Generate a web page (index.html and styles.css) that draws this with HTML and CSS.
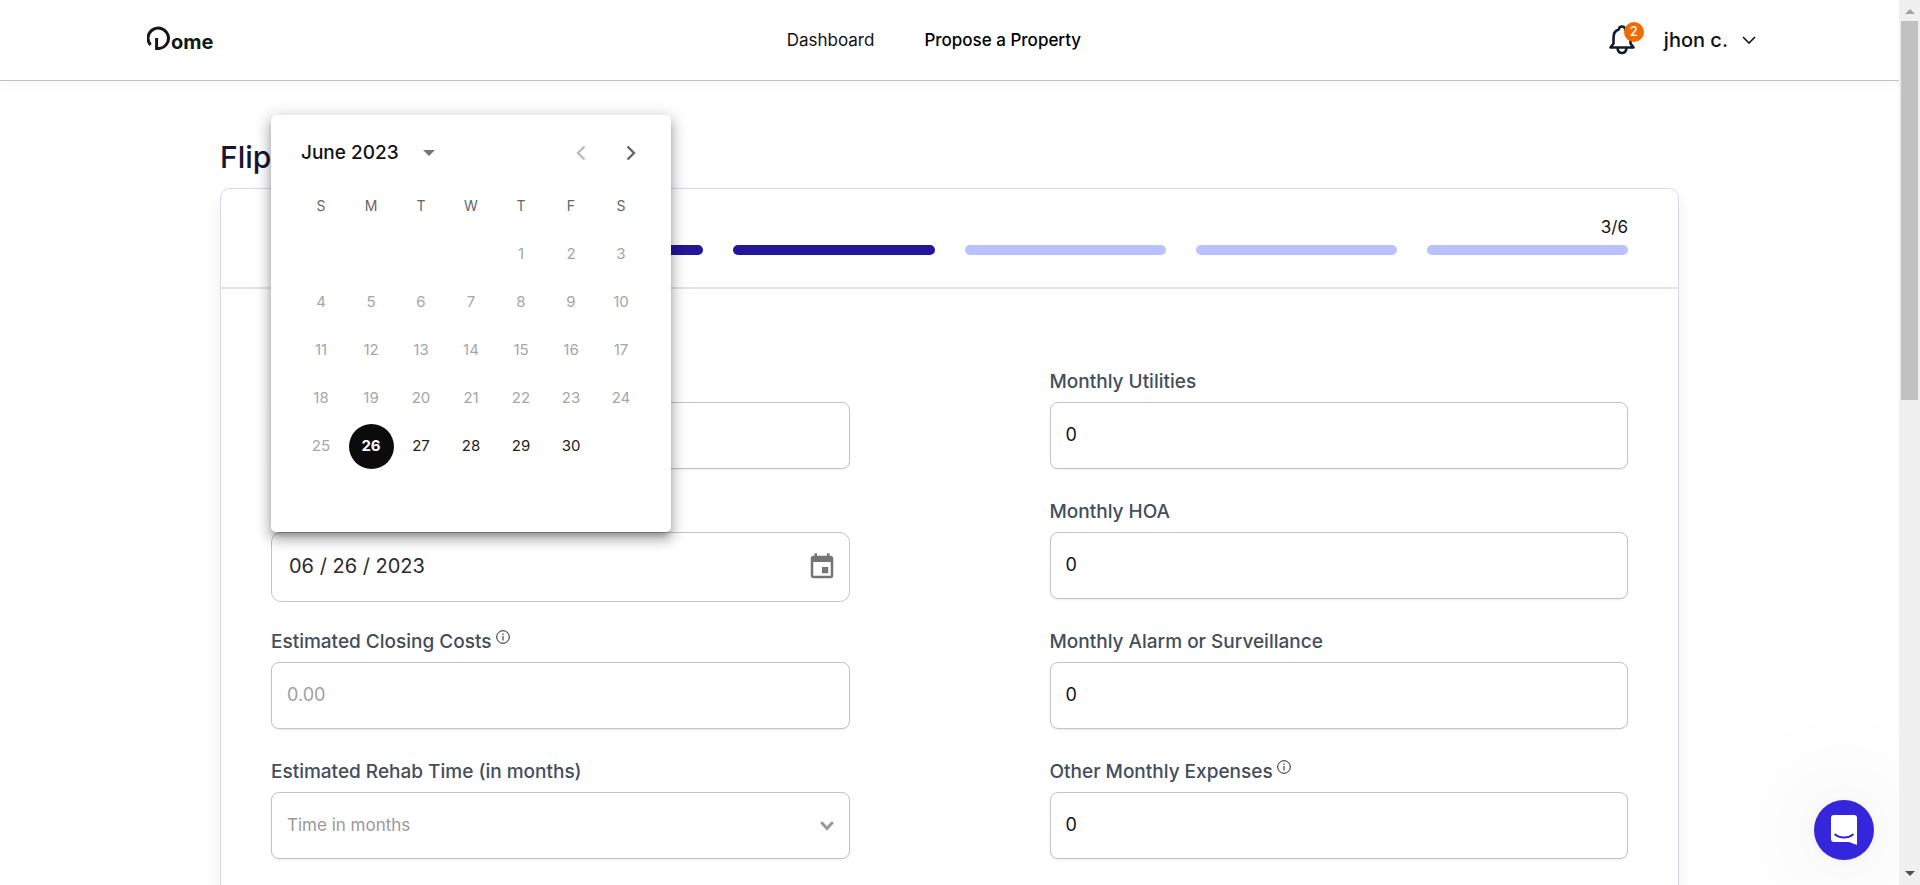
FILE: index.html
```
<!DOCTYPE html>
<html lang="en">
<head>
<meta charset="utf-8">
<title>Dome</title>
<link rel="stylesheet" href="styles.css">
</head>
<body>
<div class="page">
  <header class="topbar">
    <a class="logo" href="#">
      <svg class="logo-mark" viewBox="0 0 24 24" aria-hidden="true"><path d="M3.6 19A10.2 10.2 0 1 1 12 22.4H9.6V12" fill="none" stroke="currentColor" stroke-width="3"/></svg>
      <span>ome</span>
    </a>
    <nav class="nav">
      <a href="#">Dashboard</a>
      <a class="nav-current" href="#">Propose a Property</a>
    </nav>
    <div class="account">
      <button class="bell" aria-label="Notifications">
        <svg viewBox="0 0 26 30" aria-hidden="true"><path d="M1.500 22.500H24.500L21.500 18.500V13C21.500 8.500 19.500 5.500 16.300 4.600C16 2.400 14.800 1.500 13 1.500S10 2.400 9.700 4.600C6.500 5.500 4.500 8.500 4.500 13V18.500L1.500 22.500M8.500 23.500C9 26.500 10.600 28 13 28S17 26.500 17.500 23.500" fill="none" stroke="currentColor" stroke-width="2.600" stroke-linejoin="round" stroke-linecap="round"/></svg>
        <span class="badge">2</span>
      </button>
      <button class="user">jhon c.
        <svg viewBox="0 0 14 8" aria-hidden="true"><path d="M1 1L7 7L13 1" fill="none" stroke="currentColor" stroke-width="1.600"/></svg>
      </button>
    </div>
  </header>

  <main class="content">
    <h1 class="title">Flip</h1>
    <section class="card">
      <div class="progress">
        <span class="progress-count">3/6</span>
        <div class="steps">
          <span class="step step-done"></span>
          <span class="step step-done"></span>
          <span class="step step-done"></span>
          <span class="step"></span>
          <span class="step"></span>
          <span class="step"></span>
        </div>
      </div>
      <form class="form">
        <div class="field field-bare">
          <input class="control" type="text" aria-label="Amount">
        </div>
        <div class="field">
          <label for="utilities">Monthly Utilities</label>
          <input class="control" id="utilities" type="text" value="0">
        </div>

        <div class="field field-bare">
          <div class="date">
            <input class="control control-date" type="text" value="06 / 26 / 2023" aria-label="Date">
            <button class="date-toggle" type="button" aria-label="Choose date">
              <svg viewBox="0 0 24 24" aria-hidden="true"><path fill="currentColor" d="M17 12h-5v5h5v-5zM16 1v2H8V1H6v2H5c-1.110 0-1.990.9-1.990 2L3 19c0 1.100.890 2 2 2h14c1.100 0 2-.9 2-2V5c0-1.100-.9-2-2-2h-1V1h-2zm3 18H5V8h14v11z"/></svg>
            </button>
            <div class="calendar" role="dialog" aria-label="Calendar">
              <div class="calendar-head">
                <button class="month" type="button">June 2023
                  <svg viewBox="0 0 12 6" aria-hidden="true"><path d="M0 0H12L6 6z" fill="#757575"/></svg>
                </button>
                <div class="arrows">
                  <button class="arrow" type="button" disabled aria-label="Previous month"><svg viewBox="0 0 10 16" aria-hidden="true"><path d="M8.500 1.500L2 8L8.500 14.500" fill="none" stroke="currentColor" stroke-width="2.400"/></svg></button>
                  <button class="arrow" type="button" aria-label="Next month"><svg viewBox="0 0 10 16" aria-hidden="true"><path d="M1.500 1.500L8 8L1.500 14.500" fill="none" stroke="currentColor" stroke-width="2.400"/></svg></button>
                </div>
              </div>
              <table class="days">
                <thead>
                  <tr><th>S</th><th>M</th><th>T</th><th>W</th><th>T</th><th>F</th><th>S</th></tr>
                </thead>
                <tbody>
                  <tr><td></td><td></td><td></td><td></td><td><button type="button" disabled>1</button></td><td><button type="button" disabled>2</button></td><td><button type="button" disabled>3</button></td></tr>
                  <tr><td><button type="button" disabled>4</button></td><td><button type="button" disabled>5</button></td><td><button type="button" disabled>6</button></td><td><button type="button" disabled>7</button></td><td><button type="button" disabled>8</button></td><td><button type="button" disabled>9</button></td><td><button type="button" disabled>10</button></td></tr>
                  <tr><td><button type="button" disabled>11</button></td><td><button type="button" disabled>12</button></td><td><button type="button" disabled>13</button></td><td><button type="button" disabled>14</button></td><td><button type="button" disabled>15</button></td><td><button type="button" disabled>16</button></td><td><button type="button" disabled>17</button></td></tr>
                  <tr><td><button type="button" disabled>18</button></td><td><button type="button" disabled>19</button></td><td><button type="button" disabled>20</button></td><td><button type="button" disabled>21</button></td><td><button type="button" disabled>22</button></td><td><button type="button" disabled>23</button></td><td><button type="button" disabled>24</button></td></tr>
                  <tr><td><button type="button" disabled>25</button></td><td><button type="button" class="selected">26</button></td><td><button type="button">27</button></td><td><button type="button">28</button></td><td><button type="button">29</button></td><td><button type="button">30</button></td><td></td></tr>
                </tbody>
              </table>
            </div>
          </div>
        </div>
        <div class="field">
          <label for="hoa">Monthly HOA</label>
          <input class="control" id="hoa" type="text" value="0">
        </div>

        <div class="field">
          <label for="closing">Estimated Closing Costs
            <svg class="info" viewBox="0 0 14 14" aria-hidden="true"><circle cx="7" cy="7" r="6.300" fill="none" stroke="currentColor"/><path d="M7 6V10.500M7 3.500V5" stroke="currentColor"/></svg>
          </label>
          <input class="control" id="closing" type="text" placeholder="0.00">
        </div>
        <div class="field">
          <label for="alarm">Monthly Alarm or Surveillance</label>
          <input class="control" id="alarm" type="text" value="0">
        </div>

        <div class="field">
          <label for="rehab">Estimated Rehab Time (in months)</label>
          <div class="select">
            <select class="control control-select" id="rehab"><option>Time in months</option></select>
            <svg viewBox="0 0 14 10" aria-hidden="true"><path d="M2 2L7 7.500L12 2" fill="none" stroke="currentColor" stroke-width="3" stroke-linecap="round"/></svg>
          </div>
        </div>
        <div class="field">
          <label for="other">Other Monthly Expenses
            <svg class="info" viewBox="0 0 14 14" aria-hidden="true"><circle cx="7" cy="7" r="6.300" fill="none" stroke="currentColor"/><path d="M7 6V10.500M7 3.500V5" stroke="currentColor"/></svg>
          </label>
          <input class="control" id="other" type="text" value="0">
        </div>
      </form>
    </section>
  </main>

  <button class="chat" aria-label="Open chat">
    <svg viewBox="0 0 28 32" aria-hidden="true"><path d="M4 1H24A3 3 0 0 1 27 4V31L19 28H4A3 3 0 0 1 1 25V4A3 3 0 0 1 4 1z" fill="#fff"/><path d="M5 20.500C10 24.500 18 24.500 23 20.500" fill="none" stroke="#3525db" stroke-width="1.800" stroke-linecap="round"/></svg>
  </button>
</div>
<div class="scrollbar" aria-hidden="true">
  <svg class="scroll-arrow scroll-up" viewBox="0 0 10 5"><path d="M0 5L5 0L10 5z" fill="currentColor"/></svg>
  <div class="scroll-track"><div class="scroll-thumb"></div></div>
  <svg class="scroll-arrow" viewBox="0 0 10 5"><path d="M0 0L5 5L10 0z" fill="currentColor"/></svg>
</div>
</body>
</html>
```
FILE: styles.css
```
* {
  box-sizing: border-box;
}

body {
  margin: 0;
  height: 100vh;
  display: flex;
  overflow: hidden;
  background: #fff;
  color: #111;
  font-family: Inter, "Liberation Sans", sans-serif;
  font-size: 17px;
  line-height: 24px;
}

button {
  padding: 0;
  border: 0;
  background: none;
  color: inherit;
  font: inherit;
}

a {
  color: inherit;
  text-decoration: none;
}

svg {
  display: block;
  flex: none;
}

.page {
  position: relative;
  flex: 1;
  min-width: 0;
  overflow: hidden;
}

/* Top bar */

.topbar {
  display: flex;
  align-items: center;
  justify-content: space-between;
  height: 81px;
  padding: 0 143px 0 147px;
  border-bottom: 1px solid #b6c3d1;
  box-shadow: 0 4px 16px rgba(0, 0, 0, 0.03);
}

.logo {
  display: flex;
  width: 112px;
  padding-top: 4px;
  color: #101a18;
  font-size: 20px;
  font-weight: 700;
  line-height: 32px;
}

.logo-mark {
  width: 24px;
  height: 24px;
  color: #151515;
}

.nav {
  display: flex;
  gap: 50px;
}

.nav-current {
  font-weight: 500;
  color: #000;
}

.account {
  display: flex;
  align-items: center;
  gap: 29px;
}

.bell {
  position: relative;
  color: #14192b;
}

.bell svg {
  width: 26px;
  height: 30px;
}

.badge {
  position: absolute;
  top: -3px;
  left: 15px;
  width: 20px;
  height: 20px;
  border-radius: 50%;
  background: #f06c00;
  color: #fff;
  font-size: 13px;
  font-weight: 500;
  line-height: 18px;
}

.user {
  display: flex;
  align-items: center;
  gap: 14px;
  font-size: 20px;
  font-weight: 500;
}

.user svg {
  width: 14px;
  height: 8px;
}

/* Content */

.content {
  padding: 56px 220px 0;
}

.title {
  margin: 0 0 11px;
  color: #18152e;
  font-size: 30px;
  font-weight: 500;
  line-height: 40px;
}

.card {
  border: 1px solid #d9d7ee;
  border-radius: 10px;
  box-shadow: 0 10px 20px rgba(0, 0, 0, 0.07);
}

.progress {
  display: flex;
  flex-direction: column;
  gap: 6px;
  padding: 26px 50px 32px;
  border-bottom: 2px solid #e0e4e8;
}

.progress-count {
  align-self: flex-end;
}

.steps {
  display: flex;
  gap: 30px;
}

.step {
  flex: 1;
  height: 10px;
  border-radius: 5px;
  background: #bac1ff;
}

.step-done {
  background: #231698;
}

.form {
  display: grid;
  grid-template-columns: 1fr 1fr;
  grid-auto-rows: 102px;
  align-items: start;
  gap: 28px 200px;
  padding: 81px 50px 60px;
}

.field {
  display: flex;
  flex-direction: column;
  gap: 8px;
}

.field-bare {
  padding-top: 32px;
}

.field label {
  display: flex;
  gap: 4px;
  color: #434e5b;
  font-size: 19px;
  font-weight: 500;
}

.info {
  width: 14px;
  height: 14px;
  color: #222;
}

.control {
  width: 100%;
  height: 67px;
  padding: 0 15px 2px;
  border: 1px solid #c4c4c4;
  border-radius: 8px;
  background: #fff;
  box-shadow: 0 1px 2px rgba(0, 0, 0, 0.08);
  color: #111;
  font: inherit;
  font-size: 18px;
}

.control::placeholder {
  color: #a0a0a0;
  opacity: 1;
}

.select,
.date {
  position: relative;
}

.control-select {
  appearance: none;
  color: #999;
  font-size: 17px;
}

.select svg {
  position: absolute;
  top: 29px;
  right: 16px;
  width: 14px;
  height: 10px;
  color: #999;
  pointer-events: none;
}

.control-date {
  display: block;
  height: 70px;
  padding: 0 60px 2px 17px;
  border-radius: 10px;
  box-shadow: none;
  color: #2b2b2b;
  font-size: 20px;
}

.date-toggle {
  position: absolute;
  top: 20px;
  right: 13px;
  color: #757575;
}

.date-toggle svg {
  width: 30px;
  height: 30px;
}

/* Calendar popover */

.calendar {
  position: absolute;
  bottom: 100%;
  left: 0;
  z-index: 2;
  width: 400px;
  padding: 9px 25px 62px;
  border-radius: 5px;
  background: #fff;
  box-shadow: 0 5px 6px -3px rgba(0, 0, 0, 0.3), 0 8px 12px 1px rgba(0, 0, 0, 0.18), 0 3px 16px 3px rgba(0, 0, 0, 0.16);
}

.calendar-head {
  display: flex;
  align-items: center;
  justify-content: space-between;
  height: 57px;
  padding: 0 10px 0 5px;
}

.month {
  display: flex;
  align-items: center;
  gap: 24px;
  font-size: 19px;
  font-weight: 500;
}

.month svg {
  width: 12px;
  height: 6px;
}

.arrows {
  display: flex;
  gap: 40px;
}

.arrow {
  color: #666;
}

.arrow:disabled {
  color: #bcbcbc;
}

.arrow svg {
  width: 10px;
  height: 16px;
}

.days {
  width: 100%;
  border-collapse: collapse;
  table-layout: fixed;
  font-size: 15px;
  text-align: center;
}

.days th {
  height: 49px;
  padding: 0;
  color: #666;
  font-size: 14px;
  font-weight: 400;
}

.days td {
  height: 48px;
  padding: 0;
}

.days button {
  display: block;
  width: 45px;
  height: 45px;
  margin: 0 auto;
  border-radius: 50%;
  color: #222;
}

.days button:disabled {
  color: #a6a6a6;
}

.days .selected {
  background: #0b0b0b;
  color: #fff;
  font-weight: 700;
}

/* Chat launcher */

.chat {
  position: absolute;
  right: 25px;
  bottom: 25px;
  display: grid;
  place-items: center;
  width: 60px;
  height: 60px;
  border-radius: 50%;
  background: #3525db;
  box-shadow: 0 1px 8px rgba(0, 0, 0, 0.06), 0 2px 120px rgba(0, 0, 0, 0.16);
}

.chat svg {
  width: 28px;
  height: 32px;
}

/* Scrollbar */

.scrollbar {
  display: flex;
  flex-direction: column;
  align-items: center;
  width: 21px;
  padding: 9px 2px;
  background: #f0f0f0;
  color: #505050;
}

.scroll-arrow {
  width: 10px;
  height: 5px;
}

.scroll-up {
  color: #a3a3a3;
}

.scroll-track {
  flex: 1;
  width: 17px;
  padding: 7px 0;
}

.scroll-thumb {
  height: 45%;
  background: #c1c1c1;
}
```
